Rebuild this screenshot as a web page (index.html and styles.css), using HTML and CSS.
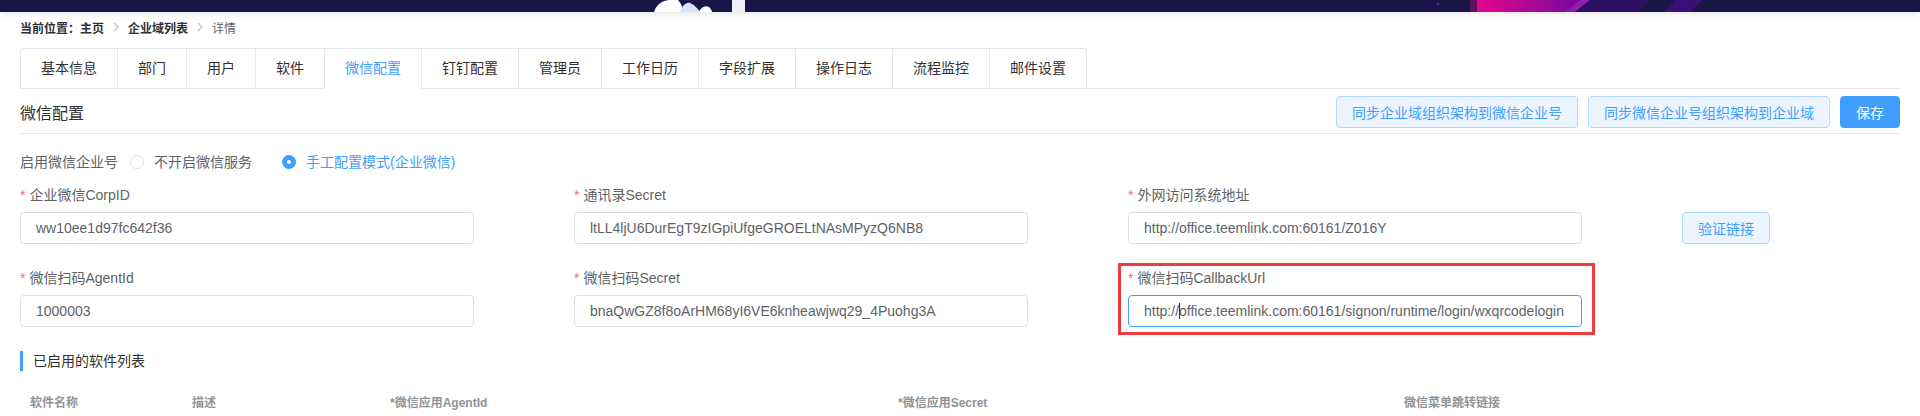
FILE: index.html
```html
<!DOCTYPE html>
<html lang="zh-CN">
<head>
    <meta charset="UTF-8">
    <title>企业域详情</title>
    <link rel="stylesheet" href="styles.css">
</head>
<body>
    <div class="topbar">
        <svg width="1920" height="12" viewBox="0 0 1920 12">
            <defs>
                <linearGradient id="pink" x1="0" y1="0" x2="1" y2="0">
                    <stop offset="0" stop-color="#e3078c"/>
                    <stop offset="1" stop-color="#6c0a9c"/>
                </linearGradient>
            </defs>
            <rect width="1920" height="12" fill="#1a1548"/>
            <path d="M654 12 C656 5 662 0 670 0 L678 0 C681 3 683 8 684 12 Z" fill="#ffffff"/>
            <path d="M680 12 C682 6 686 2 690 3 C695 5 698 9 700 12 Z" fill="#d9e3fb"/>
            <path d="M699 12 C701 7 705 5 709 7 C711 9 712 11 712 12 Z" fill="#ffffff"/>
            <rect x="732" y="0" width="13" height="12" fill="#eef0f6"/>
            <circle cx="1438" cy="4" r="1.6" fill="#4b1c9c"/>
            <rect x="1470" y="0" width="7" height="12" fill="#5e0f5e"/>
            <polygon points="1477,0 1588,0 1576,12 1477,12" fill="url(#pink)"/>
            <polygon points="1580,0 1590,0 1575,12 1565,12" fill="#8e1db0"/>
            <polygon points="1590,0 1650,0 1638,12 1575,12" fill="#2b1062"/>
            <polygon points="1676,0 1702,0 1690,12 1664,12" fill="#3a1078"/>
        </svg>
    </div>

    <div class="page">
        <div class="crumbs">
            <span class="crumb strong">当前位置：主页</span>
            <svg class="sep" width="6" height="10" viewBox="0 0 6 10"><path d="M1 1 L5 5 L1 9" fill="none" stroke="#c0c4cc" stroke-width="1.2"/></svg>
            <span class="crumb strong">企业域列表</span>
            <svg class="sep" width="6" height="10" viewBox="0 0 6 10"><path d="M1 1 L5 5 L1 9" fill="none" stroke="#c0c4cc" stroke-width="1.2"/></svg>
            <span class="crumb">详情</span>
        </div>

        <div class="tabs">
            <div class="tab-nav">
                <div class="tab">基本信息</div>
                <div class="tab">部门</div>
                <div class="tab">用户</div>
                <div class="tab">软件</div>
                <div class="tab active">微信配置</div>
                <div class="tab">钉钉配置</div>
                <div class="tab">管理员</div>
                <div class="tab">工作日历</div>
                <div class="tab">字段扩展</div>
                <div class="tab">操作日志</div>
                <div class="tab">流程监控</div>
                <div class="tab">邮件设置</div>
            </div>
        </div>

        <div class="panel-head">
            <h2>微信配置</h2>
            <div class="actions">
                <button class="btn">同步企业域组织架构到微信企业号</button>
                <button class="btn">同步微信企业号组织架构到企业域</button>
                <button class="btn btn-primary">保存</button>
            </div>
        </div>

        <div class="radio-row">
            <span class="radio-label">启用微信企业号</span>
            <label class="radio"><span class="dot"></span>不开启微信服务</label>
            <label class="radio checked"><span class="dot"></span>手工配置模式(企业微信)</label>
        </div>

        <div class="form-grid">
            <div class="field">
                <label><span class="req">*</span>企业微信CorpID</label>
                <input class="input" type="text" value="ww10ee1d97fc642f36">
            </div>
            <div class="field">
                <label><span class="req">*</span>通讯录Secret</label>
                <input class="input" type="text" value="ltLL4ljU6DurEgT9zIGpiUfgeGROELtNAsMPyzQ6NB8">
            </div>
            <div class="field">
                <label><span class="req">*</span>外网访问系统地址</label>
                <input class="input" type="text" value="http://office.teemlink.com:60161/Z016Y">
            </div>
            <button class="btn verify">验证链接</button>

            <div class="field">
                <label><span class="req">*</span>微信扫码AgentId</label>
                <input class="input" type="text" value="1000003">
            </div>
            <div class="field">
                <label><span class="req">*</span>微信扫码Secret</label>
                <input class="input" type="text" value="bnaQwGZ8f8oArHM68yI6VE6knheawjwq29_4Puohg3A">
            </div>
            <div class="field marked">
                <label><span class="req">*</span>微信扫码CallbackUrl</label>
                <div class="input-wrap">
                    <input class="input focus" type="text" value="http://office.teemlink.com:60161/signon/runtime/login/wxqrcodelogin">
                    <span class="caret"></span>
                </div>
            </div>
        </div>

        <div class="section-title">已启用的软件列表</div>

        <table class="app-table">
            <colgroup>
                <col style="width: 162px">
                <col style="width: 198px">
                <col style="width: 508px">
                <col style="width: 506px">
                <col>
            </colgroup>
            <thead>
                <tr>
                    <th>软件名称</th>
                    <th>描述</th>
                    <th>*微信应用AgentId</th>
                    <th>*微信应用Secret</th>
                    <th>微信菜单跳转链接</th>
                </tr>
            </thead>
        </table>
    </div>
</body>
</html>
```

FILE: styles.css
```css
body { margin: 0; background: #fff; font-family: "Liberation Sans", "Noto Sans CJK SC", sans-serif; font-size: 14px; color: #606266; }

/* header strip */
.topbar { height: 12px; box-shadow: 0 2px 6px rgba(0, 0, 0, 0.1); }
.topbar svg { display: block; }

.page { padding: 0 20px; }

/* breadcrumb */
.crumbs { display: flex; align-items: center; height: 20px; margin-top: 5px; font-size: 12px; }
.crumb { color: #606266; }
.crumb.strong { color: #303133; font-weight: bold; }
.sep { margin: 0 9px; }

/* card tabs */
.tabs { margin-top: 11px; border-bottom: 1px solid #e4e7ed; }
.tab-nav { display: inline-flex; border: 1px solid #e4e7ed; border-bottom: none; border-radius: 4px 4px 0 0; }
.tab { height: 39px; line-height: 39px; padding: 0 20px; color: #303133; }
.tab + .tab { border-left: 1px solid #e4e7ed; }
.tab.active { color: #409eff; box-shadow: 0 1px 0 #fff; }

/* panel header */
.panel-head { display: flex; justify-content: space-between; align-items: center; margin-top: 7px; padding-bottom: 5px; border-bottom: 1px solid #e4e7ed; }
.panel-head h2 { margin: 0; font-size: 16px; font-weight: normal; color: #303133; }
.actions { display: flex; }

.btn { height: 32px; padding: 0 15px; font-family: inherit; font-size: 14px; color: #409eff; background: #ecf5ff; border: 1px solid #b3d8ff; border-radius: 4px; cursor: pointer; }
.btn + .btn { margin-left: 10px; }
.btn-primary { color: #fff; background: #409eff; border-color: #409eff; }

/* radio group */
.radio-row { display: flex; align-items: center; height: 16px; margin-top: 20px; line-height: 16px; }
.radio-label { margin-right: 12px; }
.radio { display: inline-flex; align-items: center; margin-right: 30px; color: #606266; }
.dot { display: inline-flex; align-items: center; justify-content: center; box-sizing: border-box; width: 14px; height: 14px; margin-right: 10px; border: 1px solid #dcdfe6; border-radius: 50%; background: #fff; }
.radio.checked { color: #409eff; }
.radio.checked .dot { background: #409eff; border-color: #409eff; }
.radio.checked .dot::after { content: ''; width: 4px; height: 4px; border-radius: 50%; background: #fff; }

/* form */
.form-grid { display: grid; grid-template-columns: repeat(4, 454px); column-gap: 100px; row-gap: 24px; margin-top: 15px; }
.field label { display: block; height: 20px; line-height: 20px; margin-bottom: 7px; color: #606266; }
.req { color: #f56c6c; margin-right: 4px; }
.input { display: block; box-sizing: border-box; width: 100%; height: 32px; padding: 0 15px; font-family: "Liberation Sans", "Noto Sans CJK SC", sans-serif; font-size: 14px; color: #606266; border: 1px solid #dcdfe6; border-radius: 4px; outline: none; background: #fff; }
.input.focus { border-color: #409eff; }
.input-wrap { position: relative; }
.caret { position: absolute; left: 51px; top: 8px; width: 1px; height: 16px; background: #303133; }
.verify { align-self: end; justify-self: start; }

/* red highlight round the callback field */
.field.marked { position: relative; }
.field.marked::after { content: ''; position: absolute; left: -10px; right: -13px; top: -5px; bottom: -8px; border: 3px solid #ef3b3b; }

/* enabled apps */
.section-title { height: 20px; line-height: 20px; margin-top: 24px; padding-left: 10px; border-left: 3px solid #409eff; color: #303133; }

.app-table { width: 100%; margin-top: 10px; border-collapse: collapse; table-layout: fixed; }
.app-table th { height: 40px; padding: 0 10px; text-align: left; font-size: 12px; font-weight: bold; color: #909399; }
```
